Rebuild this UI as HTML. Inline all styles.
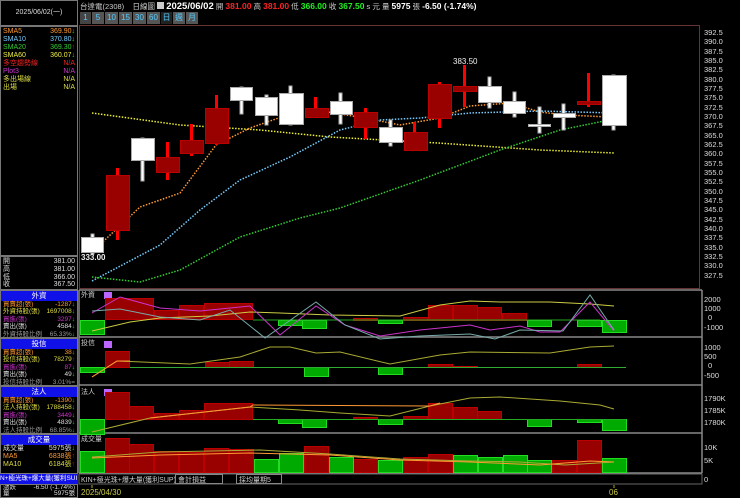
<!DOCTYPE html>
<html><head><meta charset="utf-8"><style>
*{margin:0;padding:0;box-sizing:border-box}
body{width:740px;height:498px;background:#000;overflow:hidden;font-family:"Liberation Sans","Noto Sans CJK TC",sans-serif;font-size:8px;color:#ccc;position:relative}
.a{position:absolute}
.lp{position:absolute;left:0;width:78px;overflow:hidden}
.row{display:flex;justify-content:space-between;height:8px;line-height:8px;font-size:7px;padding:0 2px;white-space:nowrap}
.s .row{height:7.4px;line-height:7.4px;font-size:6.5px}
.hd{background:#1010e8;color:#fff;text-align:center;height:10px;line-height:10px;font-size:7.5px}
.box{border:1px solid #777}
</style></head><body>
<div class="lp box" style="top:0;height:26px;text-align:center;line-height:24px;font-size:7px;color:#ddd">2025/06/02(一)</div>
<div class="lp box" style="top:26px;height:230px;padding-top:1px">
<div class="row"><span style="color:#f93">SMA5</span><span style="color:#f93">369.90<b style="color:#0f0">↓</b></span></div>
<div class="row"><span style="color:#7cf">SMA10</span><span style="color:#7cf">370.80<b style="color:#0f0">↓</b></span></div>
<div class="row"><span style="color:#3c3">SMA20</span><span style="color:#3c3">369.30<b style="color:#f00">↑</b></span></div>
<div class="row"><span style="color:#ee4">SMA60</span><span style="color:#ee4">360.07<b style="color:#0f0">↓</b></span></div>
<div class="row" style="color:#e22"><span>多空趨勢線</span><span>N/A</span></div>
<div class="row" style="color:#c3c"><span>Plot3</span><span>N/A</span></div>
<div class="row" style="color:#dd4"><span>多出場線</span><span>N/A</span></div>
<div class="row" style="color:#dd4"><span>出場</span><span>N/A</span></div>
</div>
<div class="lp box" style="top:256px;height:34px;color:#ddd;padding-top:1px">
<div class="row" style="height:7.8px;line-height:7.8px"><span>開</span><span>381.00</span></div><div class="row" style="height:7.8px;line-height:7.8px"><span>高</span><span>381.00</span></div>
<div class="row" style="height:7.8px;line-height:7.8px"><span>低</span><span>366.00</span></div><div class="row" style="height:7.8px;line-height:7.8px"><span>收</span><span>367.50</span></div></div>
<div class="lp box s" style="top:290px;height:48px">
<div class="hd">外資</div>
<div class="row" style="color:#f93"><span>買賣超(張)</span><span>-1287<b style="color:#0f0">↓</b></span></div>
<div class="row" style="color:#dd4"><span>外資持股(張)</span><span>1697008<b style="color:#0f0">↓</b></span></div>
<div class="row" style="color:#c3c"><span>買進(張)</span><span>3297<b style="color:#0f0">↓</b></span></div>
<div class="row" style="color:#ddd"><span>賣出(張)</span><span>4584<b style="color:#0f0">↓</b></span></div>
<div class="row" style="color:#999"><span>外資持股比例</span><span>65.33%<b style="color:#0f0">↓</b></span></div>
</div>
<div class="lp box s" style="top:338px;height:48px">
<div class="hd">投信</div>
<div class="row" style="color:#f93"><span>買賣超(張)</span><span>38<b style="color:#0f0">↓</b></span></div>
<div class="row" style="color:#dd4"><span>投信持股(張)</span><span>78279<b style="color:#f00">↑</b></span></div>
<div class="row" style="color:#c3c"><span>買進(張)</span><span>87<b style="color:#0f0">↓</b></span></div>
<div class="row" style="color:#ddd"><span>賣出(張)</span><span>49<b style="color:#0f0">↓</b></span></div>
<div class="row" style="color:#999"><span>投信持股比例</span><span>3.01%=</span></div>
</div>
<div class="lp box s" style="top:386px;height:48px">
<div class="hd">法人</div>
<div class="row" style="color:#f93"><span>買賣超(張)</span><span>-1390<b style="color:#0f0">↓</b></span></div>
<div class="row" style="color:#dd4"><span>法人持股(張)</span><span>1788458<b style="color:#0f0">↓</b></span></div>
<div class="row" style="color:#c3c"><span>買進(張)</span><span>3449<b style="color:#0f0">↓</b></span></div>
<div class="row" style="color:#ddd"><span>賣出(張)</span><span>4839<b style="color:#0f0">↓</b></span></div>
<div class="row" style="color:#999"><span>法人持股比例</span><span>68.85%<b style="color:#0f0">↓</b></span></div>
</div>
<div class="lp box" style="top:434px;height:40px">
<div class="hd">成交量</div>
<div class="row" style="color:#ddd"><span>成交量</span><span>5975張<b style="color:#0f0">↓</b></span></div>
<div class="row" style="color:#f93"><span>MA5</span><span>6838張<b style="color:#f00">↑</b></span></div>
<div class="row" style="color:#dd4"><span>MA10</span><span>6184張<b style="color:#f00">↑</b></span></div>
</div>
<div class="lp" style="top:474px;height:10px;background:#1010e8;color:#fff;font-size:6.5px;line-height:10px;white-space:nowrap;overflow:hidden">N+極光珠+爆大量(獲利SUI</div>
<div class="lp box" style="top:484px;height:14px;font-size:6.5px;color:#ddd"><div class="row" style="height:6px;line-height:6px;font-size:6.5px"><span>漲跌</span><span>-6.50 (-1.74%)</span></div><div class="row" style="height:6px;line-height:6px;font-size:6.5px"><span>量</span><span>5975張</span></div></div>

<div class="a" style="left:80px;top:1px;font-size:7.5px;color:#ccc;white-space:nowrap">台達電(2308)&nbsp;&nbsp;&nbsp; 日線圖 <span style="display:inline-block;width:7px;height:7px;background:#ccc"></span> <b style="color:#fff;font-size:9.5px">2025/06/02</b> 開 <b style="color:#f22;font-size:8.5px">381.00</b> 高 <b style="color:#f22;font-size:8.5px">381.00</b> 低 <b style="color:#2e2;font-size:8.5px">366.00</b> 收 <b style="color:#2e2;font-size:8.5px">367.50</b> s 元 量 <b style="color:#fff;font-size:8.5px">5975</b> 張 <b style="color:#fff;font-size:8.5px">-6.50 (-1.74%)</b></div>
<div class="a" style="left:80px;top:12px;display:flex;height:12px;font-size:8px;line-height:12px">
<span style="background:#444;color:#5cf;width:11px;text-align:center">1</span><span style="background:#555;color:#5cf;width:12px;text-align:center;margin-left:1px">5</span><span style="background:#555;color:#5cf;width:13px;text-align:center;margin-left:1px">10</span><span style="background:#555;color:#5cf;width:13px;text-align:center;margin-left:1px">15</span><span style="background:#555;color:#5cf;width:13px;text-align:center;margin-left:1px">30</span><span style="background:#555;color:#5cf;width:13px;text-align:center;margin-left:1px">60</span><span style="background:#222;color:#5cf;width:11px;text-align:center;margin-left:1px">日</span><span style="background:#555;color:#5cf;width:12px;text-align:center;margin-left:1px">週</span><span style="background:#555;color:#5cf;width:12px;text-align:center;margin-left:1px">月</span></div>

<svg class="a" style="left:0;top:0" width="740" height="498" font-family="Liberation Sans" font-size="8">
<rect x="79.5" y="25.5" width="620" height="263" fill="none" stroke="#633"/>
<g stroke="#888" stroke-width="1.5">
<line x1="79" y1="290" x2="702" y2="290"/><line x1="79" y1="337" x2="702" y2="337"/><line x1="79" y1="385" x2="702" y2="385"/><line x1="79" y1="433" x2="702" y2="433"/><line x1="79" y1="473" x2="702" y2="473"/>
<line x1="702" y1="290" x2="702" y2="473"/><line x1="79" y1="290" x2="79" y2="473"/></g>
<g fill="#ddd" font-size="7.5">
<text x="704" y="35">392.5</text><text x="704" y="44">390.0</text><text x="704" y="54">387.5</text><text x="704" y="63">385.0</text><text x="704" y="72">382.5</text><text x="704" y="82">380.0</text><text x="704" y="91">377.5</text><text x="704" y="100">375.0</text><text x="704" y="110">372.5</text><text x="704" y="119">370.0</text><text x="704" y="128">367.5</text><text x="704" y="138">365.0</text><text x="704" y="147">362.5</text><text x="704" y="156">360.0</text><text x="704" y="166">357.5</text><text x="704" y="175">355.0</text><text x="704" y="184">352.5</text><text x="704" y="194">350.0</text><text x="704" y="203">347.5</text><text x="704" y="212">345.0</text><text x="704" y="222">342.5</text><text x="704" y="231">340.0</text><text x="704" y="240">337.5</text><text x="704" y="250">335.0</text><text x="704" y="259">332.5</text><text x="704" y="268">330.0</text><text x="704" y="278">327.5</text>
<text x="704" y="302">2000</text><text x="704" y="311">1000</text><text x="708" y="320">0</text><text x="704" y="330">-1000</text>
<text x="704" y="350">1000</text><text x="704" y="359">500</text><text x="708" y="368">0</text><text x="704" y="378">-500</text>
<text x="704" y="401">1790K</text><text x="704" y="413">1785K</text><text x="704" y="425">1780K</text>
<text x="704" y="450">10K</text><text x="704" y="463">5K</text><text x="704" y="482">0</text>
</g>
<g fill="none" stroke-width="1.5" stroke-dasharray="1.5 1.5">
<polyline stroke="#ee3" points="92,113 180,125 260,130 330,137 438,143 540,150 614,153"/>
<polyline stroke="#f93" points="92,252 140,207 180,193 216,145 250,128 290,114 316,110 365,118 400,125 440,118 470,106 510,103 540,112 565,115 610,117"/>
<polyline stroke="#7cf" points="92,281 160,245 200,210 240,180 290,157 340,130 380,120 420,118 470,113 540,111 614,113"/>
<polyline stroke="#3c3" points="92,277 140,282 180,270 240,237 300,218 340,208 420,180 500,150 560,130 614,119"/>
</g>
<g fill="#f00">
<rect x="116" y="168" width="3" height="72"/><rect x="166" y="142" width="3" height="38"/><rect x="190" y="124" width="3" height="32"/><rect x="215" y="95" width="3" height="50"/><rect x="314" y="97" width="3" height="20"/><rect x="364" y="108" width="3" height="31"/><rect x="413" y="122" width="3" height="28"/><rect x="438" y="82" width="3" height="46"/><rect x="463" y="65" width="3" height="42"/><rect x="587" y="73" width="3" height="34"/>
</g>
<g fill="#900" stroke="#b00">
<rect x="106.5" y="175.5" width="23" height="55"/><rect x="156.5" y="157.5" width="23" height="15"/><rect x="180.5" y="140.5" width="23" height="13"/><rect x="205.5" y="108.5" width="23" height="35"/><rect x="305.5" y="108.5" width="23" height="9"/><rect x="354.5" y="112.5" width="23" height="15"/><rect x="404.5" y="132.5" width="23" height="18"/><rect x="428.5" y="84.5" width="23" height="34"/><rect x="453.5" y="86.5" width="23" height="5"/><rect x="577.5" y="101.5" width="23" height="3"/>
</g>
<g fill="#fff" stroke="#aaa">
<rect x="91" y="234" width="3" height="20"/><rect x="141" y="138" width="3" height="43"/><rect x="240" y="87" width="3" height="27"/><rect x="265" y="95" width="3" height="30"/><rect x="289" y="86" width="3" height="39"/><rect x="339" y="93" width="3" height="31"/><rect x="389" y="120" width="3" height="26"/><rect x="488" y="77" width="3" height="31"/><rect x="513" y="92" width="3" height="25"/><rect x="538" y="107" width="3" height="26"/><rect x="562" y="104" width="3" height="26"/><rect x="612" y="75" width="3" height="55"/>
<rect x="81.5" y="237.5" width="22" height="15"/><rect x="131.5" y="138.5" width="23" height="22"/><rect x="230.5" y="87.5" width="22" height="13"/><rect x="255.5" y="97.5" width="22" height="18"/><rect x="279.5" y="93.5" width="24" height="31"/><rect x="330.5" y="101.5" width="22" height="13"/><rect x="379.5" y="127.5" width="23" height="15"/><rect x="478.5" y="86.5" width="23" height="16"/><rect x="503.5" y="101.5" width="22" height="12"/><rect x="528.5" y="124.5" width="22" height="2"/><rect x="553.5" y="113.5" width="22" height="4"/><rect x="602.5" y="75.5" width="24" height="50"/>
</g>
<text x="81" y="260" fill="#eee" font-weight="bold" font-size="8">333.00</text>
<text x="453" y="64" fill="#eee" font-size="8">383.50</text>
<text x="81" y="297" fill="#ccc" font-size="7">外資</text>
<rect x="104" y="292" width="8" height="7" fill="#b6f"/>
<g fill="#900" stroke="#b00">
<rect x="105.5" y="298.5" width="48" height="21"/><rect x="154.5" y="310.5" width="24" height="9"/><rect x="179.5" y="305.5" width="24" height="14"/><rect x="204.5" y="303.5" width="48" height="16"/><rect x="353.5" y="318.5" width="24" height="2"/><rect x="403.5" y="317.5" width="24" height="3"/><rect x="428.5" y="305.5" width="24" height="15"/><rect x="453.5" y="305.5" width="24" height="15"/><rect x="477.5" y="307.5" width="24" height="13"/><rect x="502.5" y="313.5" width="24" height="7"/></g>
<g fill="#0a0" stroke="#2d2">
<rect x="80.5" y="320.5" width="24" height="14"/><rect x="278.5" y="320.5" width="24" height="5"/><rect x="302.5" y="320.5" width="24" height="8"/><rect x="378.5" y="320.5" width="24" height="3"/><rect x="527.5" y="320.5" width="24" height="6"/><rect x="577.5" y="320.5" width="24" height="6"/><rect x="602.5" y="320.5" width="24" height="12"/></g>
<line x1="253" y1="320" x2="600" y2="320" stroke="#2a2"/>
<polyline fill="none" stroke="#cc4" points="92,331 130,322 160,318 210,316 250,312 280,313 330,315 400,316 440,305 470,301 500,302 550,302 590,304 614,306"/>
<polyline fill="none" stroke="#c3c" points="92,313 120,297 160,308 200,311 250,306 280,335 316,306 345,325 380,336 420,330 470,325 490,330 520,326 540,332 560,332 590,302 614,331"/>
<polyline fill="none" stroke="#7aa" points="92,311 120,309 160,317 200,320 230,310 265,338 316,302 345,325 380,339 420,336 470,334 495,339 520,330 563,331 590,295 614,330"/>
<text x="81" y="345" fill="#ccc" font-size="7">投信</text>
<rect x="104" y="341" width="8" height="7" fill="#b6f"/>
<g fill="#900" stroke="#b00"><rect x="105.5" y="351.5" width="24" height="16"/><rect x="205.5" y="362.5" width="24" height="5"/><rect x="229.5" y="361.5" width="24" height="6"/><rect x="428.5" y="364.5" width="24" height="3"/><rect x="453.5" y="366.5" width="24" height="1"/><rect x="577.5" y="364.5" width="24" height="3"/></g>
<g fill="#0a0" stroke="#2d2"><rect x="80.5" y="367.5" width="24" height="5"/><rect x="304.5" y="367.5" width="24" height="9"/><rect x="378.5" y="367.5" width="24" height="7"/></g>
<line x1="130" y1="367.5" x2="626" y2="367.5" stroke="#3a3"/>
<polyline fill="none" stroke="#aa3" points="92,377 117,361 190,364 240,357 270,347 290,347 316,353 340,352 390,364 440,355 470,352 550,353 590,347 614,346"/>
<polyline fill="none" stroke="#f93" points="92,377 117,361 130,361"/>
<text x="81" y="394" fill="#ccc" font-size="7">法人</text>
<rect x="104" y="389" width="8" height="7" fill="#b6f"/>
<g fill="#900" stroke="#b00"><rect x="105.5" y="392.5" width="24" height="27"/><rect x="129.5" y="406.5" width="24" height="13"/><rect x="154.5" y="413.5" width="24" height="6"/><rect x="179.5" y="410.5" width="24" height="9"/><rect x="204.5" y="403.5" width="48" height="16"/><rect x="353.5" y="417.5" width="24" height="2"/><rect x="403.5" y="416.5" width="24" height="3"/><rect x="428.5" y="403.5" width="24" height="16"/><rect x="453.5" y="407.5" width="24" height="12"/><rect x="477.5" y="411.5" width="24" height="8"/></g>
<g fill="#0a0" stroke="#2d2"><rect x="80.5" y="419.5" width="24" height="15"/><rect x="278.5" y="419.5" width="24" height="4"/><rect x="302.5" y="419.5" width="24" height="8"/><rect x="378.5" y="419.5" width="24" height="5"/><rect x="527.5" y="419.5" width="24" height="7"/><rect x="577.5" y="419.5" width="24" height="3"/><rect x="602.5" y="419.5" width="24" height="11"/></g>
<line x1="253" y1="419.5" x2="626" y2="419.5" stroke="#2a2"/>
<polyline fill="none" stroke="#aa3" points="92,432 150,418 250,407 300,410 340,413 390,416 430,406 470,398 500,397 560,401 600,405 614,409"/>
<polyline fill="none" stroke="#f93" points="150,418 250,407 253,405 430,406 440,403"/>
<text x="81" y="441" fill="#ccc" font-size="7">成交量</text>
<g fill="#900" stroke="#b00"><rect x="105.5" y="438.5" width="24" height="34"/><rect x="129.5" y="444.5" width="24" height="28"/><rect x="154.5" y="451.5" width="24" height="21"/><rect x="179.5" y="452.5" width="24" height="20"/><rect x="204.5" y="448.5" width="24" height="24"/><rect x="229.5" y="449.5" width="24" height="23"/><rect x="304.5" y="446.5" width="24" height="26"/><rect x="353.5" y="459.5" width="24" height="13"/><rect x="403.5" y="457.5" width="24" height="15"/><rect x="428.5" y="454.5" width="24" height="18"/><rect x="552.5" y="460.5" width="24" height="12"/><rect x="577.5" y="440.5" width="24" height="32"/></g>
<g fill="#0a0" stroke="#2d2"><rect x="80.5" y="451.5" width="24" height="21"/><rect x="254.5" y="459.5" width="24" height="13"/><rect x="279.5" y="453.5" width="24" height="19"/><rect x="329.5" y="457.5" width="24" height="15"/><rect x="378.5" y="460.5" width="24" height="12"/><rect x="453.5" y="455.5" width="24" height="17"/><rect x="478.5" y="457.5" width="24" height="15"/><rect x="503.5" y="455.5" width="24" height="17"/><rect x="527.5" y="460.5" width="24" height="12"/><rect x="602.5" y="458.5" width="24" height="14"/></g>
<polyline fill="none" stroke="#aa3" points="92,457 160,452 260,450 330,454 400,459 470,461 520,462 565,465 614,462"/>
<polyline fill="none" stroke="#f93" points="92,458 160,455 250,453 330,455 400,460 470,462 540,465 590,461 614,462"/>
<rect x="79" y="474" width="623" height="10" fill="#000" stroke="#666"/>
<text x="81" y="482" fill="#ccc" font-size="7">KIN+極光珠+爆大量(獲利SUP)</text>
<rect x="175.5" y="474.5" width="47" height="9" fill="none" stroke="#888"/><text x="178" y="482" fill="#ccc" font-size="7">會計損益</text>
<rect x="236.5" y="474.5" width="45" height="9" fill="none" stroke="#888"/><text x="239" y="482" fill="#ccc" font-size="7">採均量期5</text>
<line x1="92" y1="485" x2="92" y2="488" stroke="#aa3"/><line x1="614" y1="485" x2="614" y2="488" stroke="#aa3"/>
<text x="81" y="495" fill="#cc4" font-size="8">2025/04/30</text>
<text x="609" y="495" fill="#cc4" font-size="8">06</text>
</svg>
</body></html>
